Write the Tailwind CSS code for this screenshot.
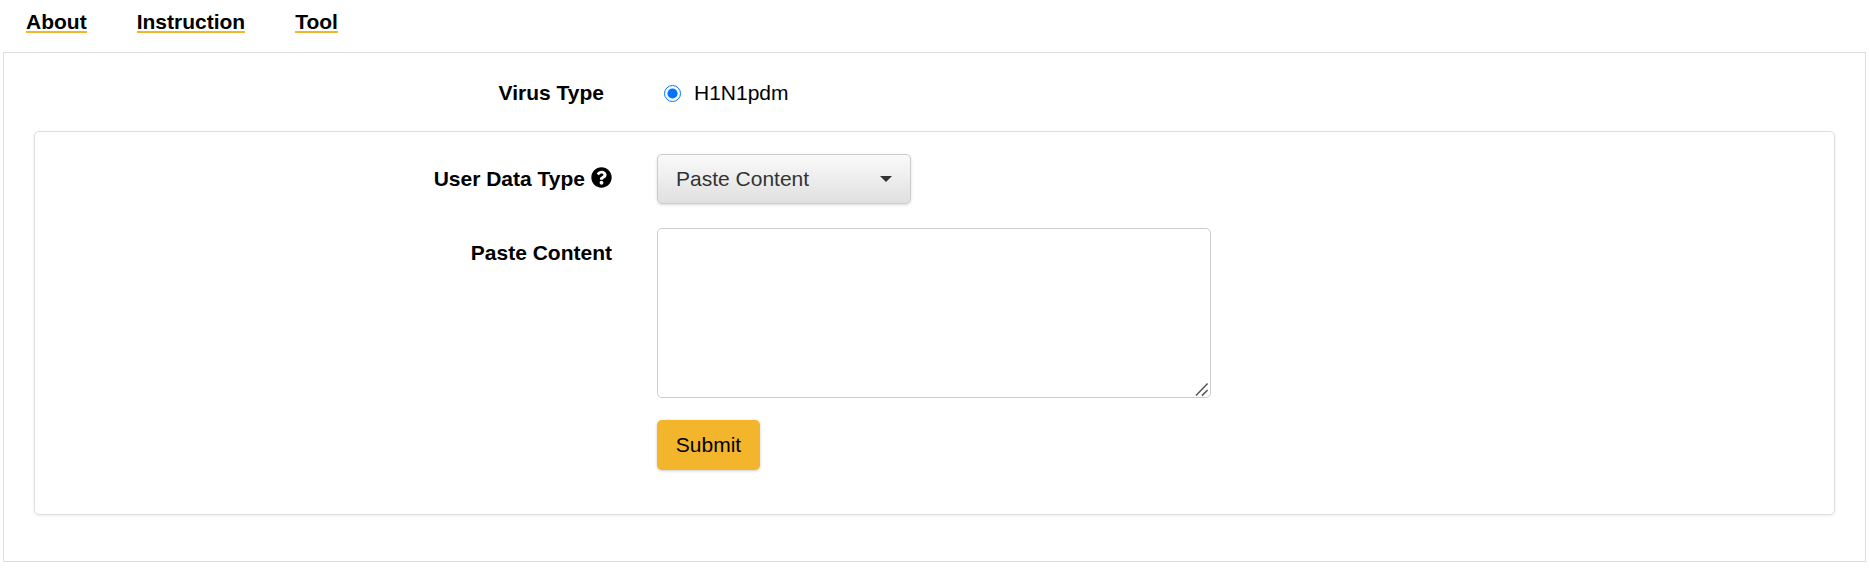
<!DOCTYPE html>
<html lang="en">

<head>
    <meta charset="UTF-8">
    <meta name="viewport" content="width=device-width, initial-scale=1.0">
    <title>Virus Tool</title>
    <script src="https://cdn.jsdelivr.net/npm/@tailwindcss/browser@4"></script>
</head>

<body class="bg-white text-black font-['Liberation_Sans',Arial,sans-serif]">
    <nav class="h-[52px] flex items-start gap-[50px] pl-[26px] pt-[9px] text-[21px] font-bold leading-[26px]">
        <a href="#" class="border-b-2 border-[#f2b52b] h-[24px]">About</a>
        <a href="#" class="border-b-2 border-[#f2b52b] h-[24px]">Instruction</a>
        <a href="#" class="border-b-2 border-[#f2b52b] h-[24px]">Tool</a>
    </nav>

    <div class="ml-[3px] mr-[4px] h-[510px] border border-[#dedede] px-[30px]">
        <div class="h-[78px] pt-[2px] -mx-[30px] flex items-center">
            <label class="w-[600px] text-right text-[21px] font-bold">Virus Type</label>
            <input type="radio" name="virus" checked class="ml-[60px] w-[17px] h-[17px] accent-[#0075ff]">
            <span class="ml-[13px] text-[21px]">H1N1pdm</span>
        </div>

        <form class="border border-[#dedede] rounded-[5px] shadow-[0_1px_3px_rgba(0,0,0,0.08)] pt-[22px] pb-[44px] grid grid-cols-[577px_1fr] gap-x-[45px]">
            <div class="h-[50px] flex items-center justify-end gap-[6px] text-[21px] font-bold">
                <span>User Data Type</span>
                <svg class="w-[21px] h-[21px] -mt-[4px]" viewBox="0 0 512 512" fill="currentColor">
                    <path d="M504 256c0 136.997-111.043 248-248 248S8 392.997 8 256C8 119.083 119.043 8 256 8s248 111.083 248 248zM262.655 90c-54.497 0-89.255 22.957-116.549 63.758-3.536 5.286-2.353 12.415 2.715 16.258l34.699 26.31c5.205 3.947 12.621 3.008 16.665-2.122 17.864-22.658 30.113-35.797 57.303-35.797 20.429 0 45.698 13.148 45.698 32.958 0 14.976-12.363 22.667-32.534 33.976C247.128 238.528 216 254.941 216 296v4c0 6.627 5.373 12 12 12h56c6.627 0 12-5.373 12-12v-1.333c0-28.462 83.186-29.647 83.186-106.667 0-58.002-60.165-102-116.531-102zM256 338c-25.365 0-46 20.635-46 46 0 25.364 20.635 46 46 46s46-20.636 46-46c0-25.365-20.635-46-46-46z"/>
                </svg>
            </div>
            <div>
                <button type="button" class="w-[254px] h-[50px] pl-[18px] pr-[18px] flex items-center justify-between border border-[#cccccc] rounded-[5px] bg-gradient-to-b from-[#fafafa] to-[#e0e0e0] shadow-[0_1px_3px_rgba(0,0,0,0.15)] text-[21px] text-[#333333]">
                    <span>Paste Content</span>
                    <span class="border-x-[6px] border-x-transparent border-t-[6px] border-t-[#333333]"></span>
                </button>
            </div>

            <div class="mt-[24px] h-[50px] flex items-center justify-end text-[21px] font-bold">Paste Content</div>
            <div class="mt-[24px] relative w-[554px]">
                <textarea class="block w-full h-[170px] border border-[#cccccc] rounded-[5px] resize-none"></textarea>
                
                <svg class="absolute right-[2px] bottom-[1px] w-[14px] h-[14px] pointer-events-none" viewBox="0 0 14 14" fill="none" stroke="#555555" stroke-width="1.5">
                    <path d="M1 12.6 12.6 .6M7 12.6 12.6 7"/>
                </svg>
            </div>

            <div></div>
            <div class="mt-[22px]">
                <button type="submit" class="w-[103px] h-[50px] rounded-[5px] bg-[#f2b52b] shadow-[0_1px_3px_rgba(0,0,0,0.2)] text-[21px]">Submit</button>
            </div>
        </form>
    </div>
</body>

</html>
